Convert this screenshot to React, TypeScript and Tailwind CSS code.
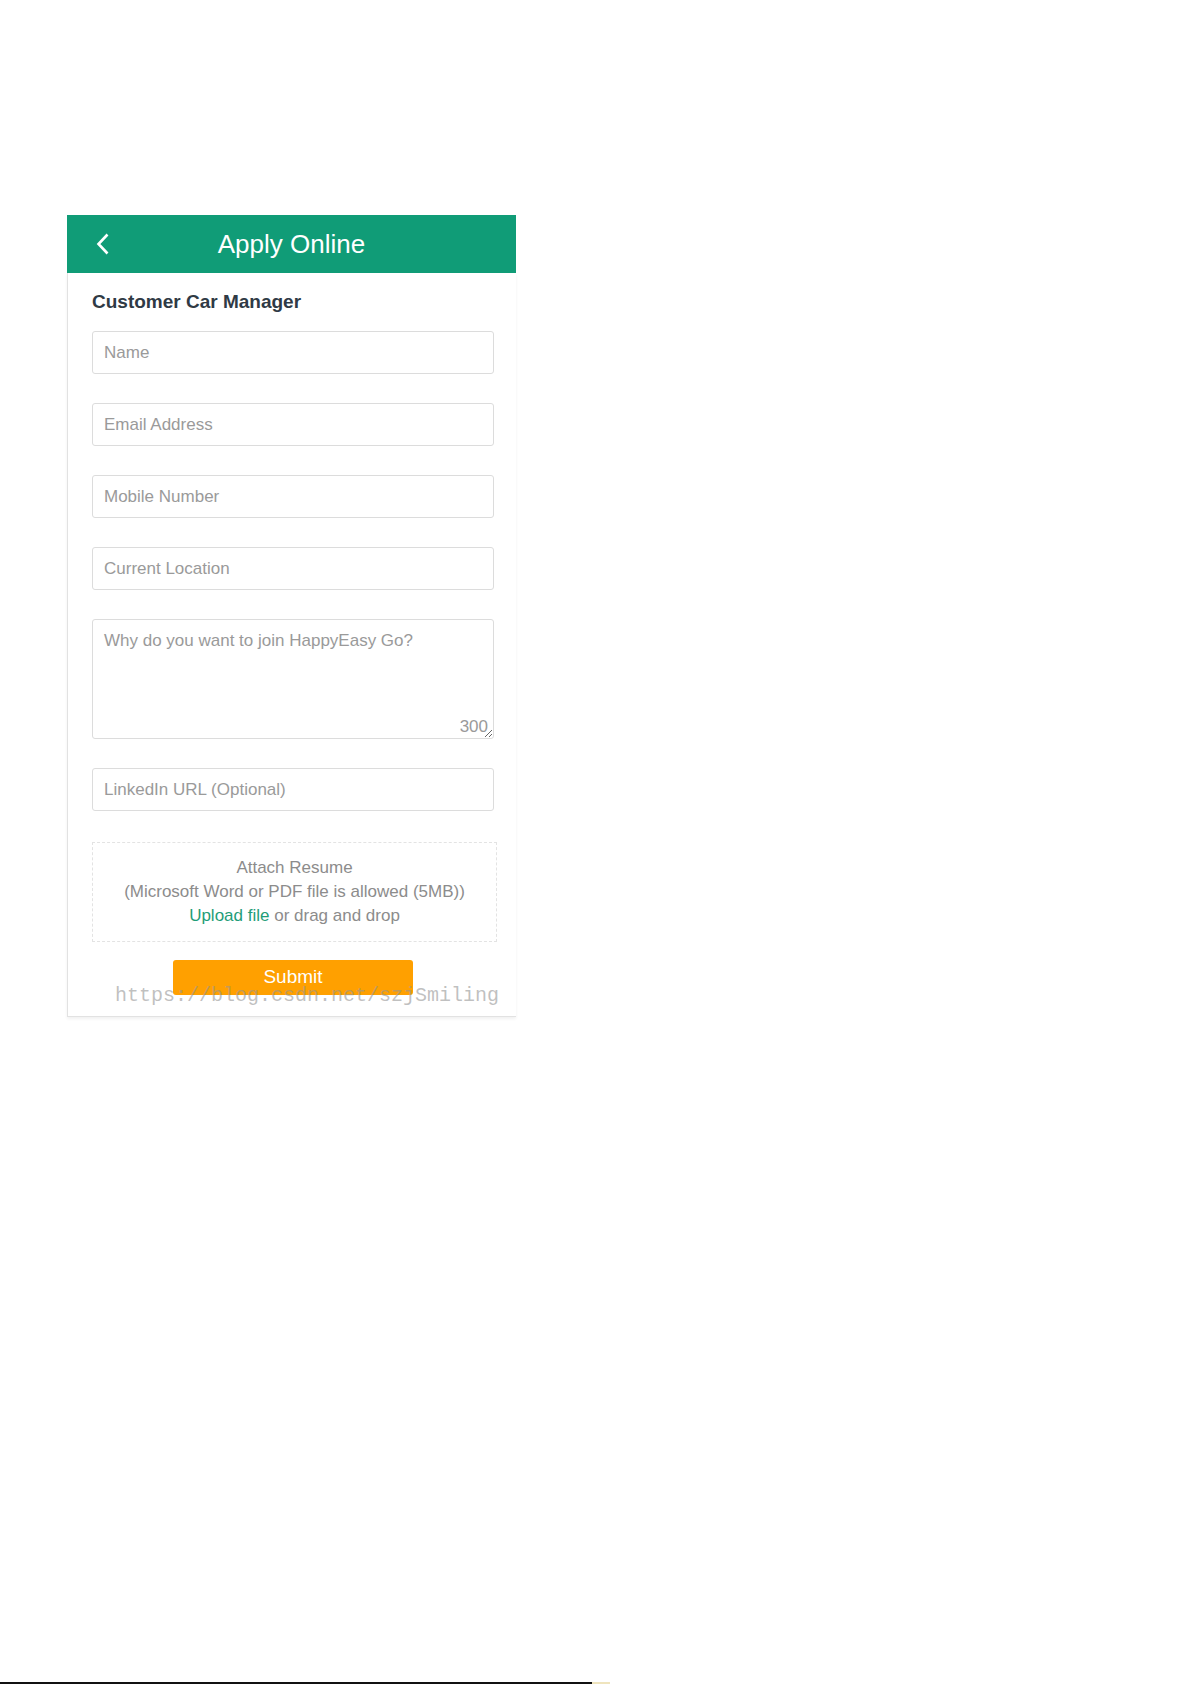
const fields = ["Name", "Email Address", "Mobile Number", "Current Location"];

function BackIcon() {
  return (
    <svg width="14" height="22" viewBox="0 0 14 22" fill="none">
      <path d="M11.5 1.5 L2.5 11 L11.5 20.5" stroke="#fff" strokeWidth="2.6" strokeLinejoin="miter" />
    </svg>
  );
}

export default function App() {
  return (
    <div className="flex min-h-[1685px] flex-col bg-white font-['Liberation_Sans',Arial,sans-serif]">
      <div className="pl-[67px] pt-[215px]">
        <div className="relative w-[449px]">
          <div className="grid h-[58px] grid-cols-[1fr_auto_1fr] items-center bg-[#109c77] text-white">
            <div className="pl-[29px]">
              <BackIcon />
            </div>
            <h1 className="text-[26px] leading-none">Apply Online</h1>
            <div />
          </div>

          <div className="border-b border-l border-[#e2e2e2] pb-[21px] pl-[24px] pr-[22px] pt-[18px] shadow-[0_2px_3px_rgba(0,0,0,0.06)]">
            <h2 className="text-[19px] font-bold leading-[22px] text-[#2f3a45]">Customer Car Manager</h2>

            <div className="mt-[18px] flex flex-col gap-[29px]">
              {fields.map((f) => (
                <input
                  key={f}
                  placeholder={f}
                  className="h-[43px] w-full rounded-[3px] border border-[#dcdcdc] px-[11px] text-[17px] text-[#333] outline-none placeholder:text-[#9a9a9a]"
                />
              ))}

              <div className="relative">
                <textarea
                  placeholder="Why do you want to join HappyEasy Go?"
                  className="block h-[120px] w-full rounded-[3px] border border-[#dcdcdc] px-[11px] pt-[10px] text-[17px] leading-[22px] text-[#333] outline-none placeholder:text-[#9a9a9a]"
                />
                <span className="absolute bottom-[2px] right-[6px] text-[17px] leading-[20px] text-[#9a9a9a]">300</span>
              </div>

              <input
                placeholder="LinkedIn URL (Optional)"
                className="h-[43px] w-full rounded-[3px] border border-[#dcdcdc] px-[11px] text-[17px] text-[#333] outline-none placeholder:text-[#9a9a9a]"
              />
            </div>

            <div className="mt-[31px] flex h-[100px] w-[405px] flex-col items-center justify-center border border-dashed border-[#e3e3e3] text-center text-[17px] leading-[24px] text-[#8c8c8c]">
              <p>Attach Resume</p>
              <p>(Microsoft Word or PDF file is allowed (5MB))</p>
              <p>
                <span className="text-[#1f9d78]">Upload file</span> or drag and drop
              </p>
            </div>

            <div className="mt-[18px] flex justify-center">
              <button className="h-[35px] w-[240px] rounded-[3px] bg-[#ffa000] text-[19px] text-white">Submit</button>
            </div>
          </div>

          <span className="pointer-events-none absolute left-[48px] top-[771px] font-['Liberation_Mono',monospace] text-[20px] leading-[20px] text-[rgba(150,150,150,0.6)]">
            https://blog.csdn.net/szjSmiling
          </span>
        </div>
      </div>

      <div className="mt-auto flex items-center pb-[1px]">
        <div className="h-[2px] w-[592px] bg-[#111]" />
        <div className="h-[2px] w-[18px] bg-[#efe4bd]" />
      </div>
    </div>
  );
}
